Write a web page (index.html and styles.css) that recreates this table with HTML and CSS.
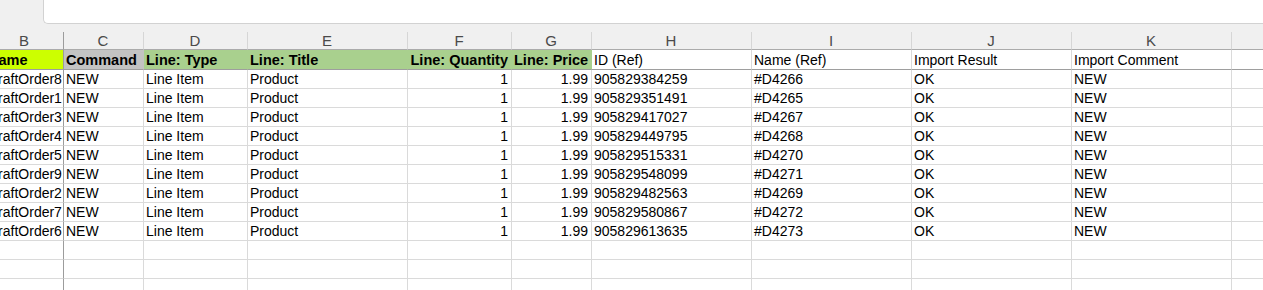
FILE: index.html
```html
<!DOCTYPE html>
<html lang="en">
<head>
  <meta charset="UTF-8">
  <meta name="viewport" content="width=device-width, initial-scale=1.0">
  <title>Draft Orders Import</title>
  <link rel="stylesheet" href="styles.css">
</head>
<body>
  <div class="toolbar">
    <div class="formula-box"></div>
  </div>

  <div class="sheet">
    <div class="row col-heads">
      <div class="frozen">B</div>
      <div>C</div>
      <div>D</div>
      <div>E</div>
      <div>F</div>
      <div>G</div>
      <div>H</div>
      <div>I</div>
      <div>J</div>
      <div>K</div>
      <div></div>
    </div>

    <div class="row titles">
      <div class="frozen fill-lime">Name</div>
      <div class="fill-gray">Command</div>
      <div class="fill-green">Line: Type</div>
      <div class="fill-green">Line: Title</div>
      <div class="fill-green num">Line: Quantity</div>
      <div class="fill-green num">Line: Price</div>
      <div>ID (Ref)</div>
      <div>Name (Ref)</div>
      <div>Import Result</div>
      <div>Import Comment</div>
      <div></div>
    </div>

    <div class="row">
      <div class="frozen">DraftOrder8</div><div>NEW</div><div>Line Item</div><div>Product</div>
      <div class="num">1</div><div class="num">1.99</div><div>905829384259</div><div>#D4266</div>
      <div>OK</div><div>NEW</div><div></div>
    </div>
    <div class="row">
      <div class="frozen">DraftOrder1</div><div>NEW</div><div>Line Item</div><div>Product</div>
      <div class="num">1</div><div class="num">1.99</div><div>905829351491</div><div>#D4265</div>
      <div>OK</div><div>NEW</div><div></div>
    </div>
    <div class="row">
      <div class="frozen">DraftOrder3</div><div>NEW</div><div>Line Item</div><div>Product</div>
      <div class="num">1</div><div class="num">1.99</div><div>905829417027</div><div>#D4267</div>
      <div>OK</div><div>NEW</div><div></div>
    </div>
    <div class="row">
      <div class="frozen">DraftOrder4</div><div>NEW</div><div>Line Item</div><div>Product</div>
      <div class="num">1</div><div class="num">1.99</div><div>905829449795</div><div>#D4268</div>
      <div>OK</div><div>NEW</div><div></div>
    </div>
    <div class="row">
      <div class="frozen">DraftOrder5</div><div>NEW</div><div>Line Item</div><div>Product</div>
      <div class="num">1</div><div class="num">1.99</div><div>905829515331</div><div>#D4270</div>
      <div>OK</div><div>NEW</div><div></div>
    </div>
    <div class="row">
      <div class="frozen">DraftOrder9</div><div>NEW</div><div>Line Item</div><div>Product</div>
      <div class="num">1</div><div class="num">1.99</div><div>905829548099</div><div>#D4271</div>
      <div>OK</div><div>NEW</div><div></div>
    </div>
    <div class="row">
      <div class="frozen">DraftOrder2</div><div>NEW</div><div>Line Item</div><div>Product</div>
      <div class="num">1</div><div class="num">1.99</div><div>905829482563</div><div>#D4269</div>
      <div>OK</div><div>NEW</div><div></div>
    </div>
    <div class="row">
      <div class="frozen">DraftOrder7</div><div>NEW</div><div>Line Item</div><div>Product</div>
      <div class="num">1</div><div class="num">1.99</div><div>905829580867</div><div>#D4272</div>
      <div>OK</div><div>NEW</div><div></div>
    </div>
    <div class="row">
      <div class="frozen">DraftOrder6</div><div>NEW</div><div>Line Item</div><div>Product</div>
      <div class="num">1</div><div class="num">1.99</div><div>905829613635</div><div>#D4273</div>
      <div>OK</div><div>NEW</div><div></div>
    </div>

    <div class="row">
      <div class="frozen"></div><div></div><div></div><div></div><div></div><div></div>
      <div></div><div></div><div></div><div></div><div></div>
    </div>
    <div class="row">
      <div class="frozen"></div><div></div><div></div><div></div><div></div><div></div>
      <div></div><div></div><div></div><div></div><div></div>
    </div>
    <div class="row">
      <div class="frozen"></div><div></div><div></div><div></div><div></div><div></div>
      <div></div><div></div><div></div><div></div><div></div>
    </div>
  </div>
</body>
</html>
```

FILE: styles.css
```css
html, body {
  margin: 0;
  height: 100%;
  overflow: hidden;
}
body {
  font-family: "Liberation Sans", Arial, sans-serif;
  font-size: 14px;
  color: #000;
  background-color: #fff;
}
.toolbar {
  height: 24px;
  background-color: #f0f0f0;
}
.formula-box {
  box-sizing: border-box;
  height: 24px;
  margin-left: 43px;
  background-color: #fff;
  border-left: 1px solid #d2d2d2;
  border-bottom: 1px solid #d2d2d2;
  border-bottom-left-radius: 5px;
}
.sheet {
  margin-left: -14px;
}
.row {
  display: grid;
  grid-template-columns: 78px 80px 104px 160px 104px 80px 160px 160px 160px 160px 160px;
  height: 19px;
}
.row > div {
  box-sizing: border-box;
  padding: 1px 3px 0 2px;
  line-height: 17px;
  white-space: nowrap;
  overflow: hidden;
  border-right: 1px solid #dadada;
  border-bottom: 1px solid #dadada;
}
.row > .frozen {
  border-right-color: #9c9c9c;
}
.num {
  text-align: right;
}
.col-heads {
  height: 26px;
  padding-top: 8px;
  box-sizing: border-box;
  background-color: #f0f0f0;
}
.col-heads > div {
  padding-top: 0;
  text-align: center;
  font-size: 15px;
  line-height: 17px;
  color: #4a4a4a;
  border-right-color: #d6d6d6;
  border-bottom-color: #ababab;
}
.titles {
  height: 20px;
}
.titles > div {
  line-height: 18px;
  border-bottom-color: #9e9e9e;
}
.fill-lime,
.fill-gray,
.fill-green {
  font-weight: bold;
  font-size: 14.5px;
}
.fill-lime {
  background-color: #ccff00;
}
.fill-gray {
  background-color: #c3c3c3;
}
.titles > .fill-gray {
  border-right-color: #c3c3c3;
}
.fill-green {
  background-color: #a9d08e;
}
.titles > .fill-green {
  border-right-color: #a9d08e;
}
```
